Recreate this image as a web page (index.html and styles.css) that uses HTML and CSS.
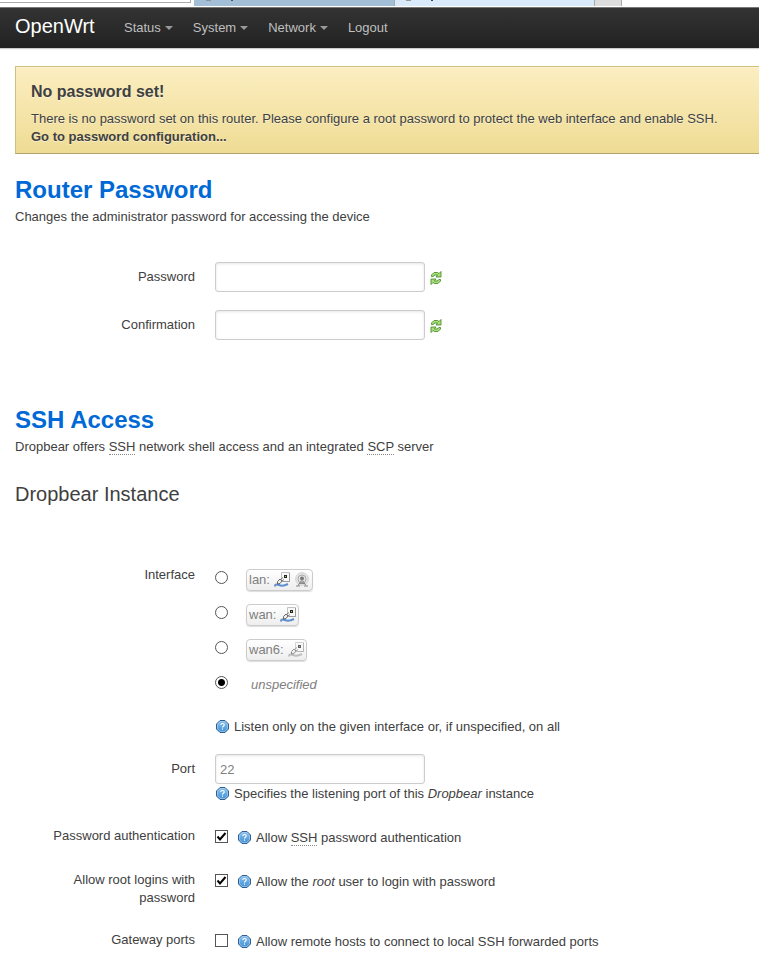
FILE: index.html
```html
<!DOCTYPE html>
<html lang="en">
<head>
<meta charset="utf-8">
<meta name="viewport" content="width=device-width, initial-scale=1">
<title>OpenWrt - Router Password</title>
<link rel="stylesheet" href="styles.css">
</head>
<body>
<svg class="defs" aria-hidden="true">
  <defs>
    <linearGradient id="help-fill" x1="0" y1="0" x2="0" y2="1"><stop offset="0" stop-color="#8fc4ee"/><stop offset="1" stop-color="#3d8ed4"/></linearGradient>
    <symbol id="help" viewBox="0 0 13 13">
      <path d="M4 .5h5L12.500 4v5L9 12.500H4L.5 9V4z" fill="url(#help-fill)" stroke="#2f5f90"/>
      <path d="M4.300 1.500h4.400l2.800 2.800v4.400l-2.800 2.800H4.300L1.500 8.700V4.300z" fill="none" stroke="#a5cff2" stroke-width=".7"/>
      <path d="M4.700 5c0-2 3.600-2 3.600 0 0 1.200-1.800 1.200-1.800 2.500M6.500 8.600v1.200" fill="none" stroke="#fff" stroke-width="1.100"/>
    </symbol>
    <symbol id="reload" viewBox="0 0 12 14">
      <path d="M1.500 5.500V4L4 1.500h3.500l1.500 1 2-2v5.500H6L7.500 4H5L3 5.500z" fill="#a9dd78" stroke="#4b8f2c" stroke-width=".9"/>
      <path d="M10.500 8.500V10L8 12.500H4.500l-1.500-1-2 2V8h5L4.500 10H7l2-1.500z" fill="#a9dd78" stroke="#4b8f2c" stroke-width=".9"/>
    </symbol>
    <symbol id="port" viewBox="0 0 16 16">
      <path d="M7.500 .5h8v9h-8z" fill="#f8f8f8" stroke="#c2c2c2"/>
      <path d="M15.500 1v8.500H9" fill="none" stroke="#999"/>
      <path d="M10 3h3v3h-3z" fill="#222"/><path d="M11 4h1v1h-1z" fill="var(--lamp)"/>
      <path d="M1 14.500c0-3 3-2 4-1.500 2 1 5 1 9-1" fill="none" stroke="var(--cable)" stroke-width="2"/>
      <path d="M3.500 12V9.500L6 7l2 2-2 2.500z" fill="#eee" stroke="#666"/>
      <path d="M6.500 7.500L9 5.500M8 9l2-1.500" stroke="#777"/>
    </symbol>
    <symbol id="wifi" viewBox="0 0 16 16">
      <circle cx="8" cy="7" r="6.300" fill="#e6e6e6" stroke="#d0d0d0"/>
      <circle cx="8" cy="7" r="4" fill="none" stroke="#aaa"/>
      <circle cx="8" cy="6.500" r="2" fill="#777"/>
      <path d="M8 7v4M7 9l-3 4.500M9 9l3 4.500M2 14h4M10 14h4M5 11.500h6" fill="none" stroke="#888"/>
    </symbol>
  </defs>
</svg>

<div class="browser" aria-hidden="true">
  <span class="address"></span>
  <span class="tab tab-back"></span>
  <span class="tab tab-front"></span>
  <span class="tab tab-new"></span>
</div>

<header class="topbar">
  <a class="brand" href="#">OpenWrt</a>
  <nav class="menu">
    <a class="more" href="#">Status</a>
    <a class="more" href="#">System</a>
    <a class="more" href="#">Network</a>
    <a href="#">Logout</a>
  </nav>
</header>

<main>
  <section class="alert">
    <h4>No password set!</h4>
    <p>There is no password set on this router. Please configure a root password to protect the web interface and enable SSH.</p>
    <a href="#password">Go to password configuration...</a>
  </section>

  <form>
    <section>
      <h2>Router Password</h2>
      <p>Changes the administrator password for accessing the device</p>
      <div class="fields passwords">
        <div class="row">
          <label class="name" for="password">Password</label>
          <div class="entry"><input class="text" id="password" type="password"><button class="reveal" type="button" aria-label="Reveal password"><svg><use href="#reload"/></svg></button></div>
        </div>
        <div class="row">
          <label class="name" for="confirm">Confirmation</label>
          <div class="entry"><input class="text" id="confirm" type="password"><button class="reveal" type="button" aria-label="Reveal confirmation"><svg><use href="#reload"/></svg></button></div>
        </div>
      </div>
    </section>

    <section class="ssh">
      <h2>SSH Access</h2>
      <p>Dropbear offers <abbr>SSH</abbr> network shell access and an integrated <abbr>SCP</abbr> server</p>
      <h3>Dropbear Instance</h3>
      <div class="fields instance">
        <div class="row" role="radiogroup" aria-labelledby="iface-name">
          <span class="name" id="iface-name">Interface</span>
          <div>
            <div class="choices">
              <div class="choice"><input type="radio" name="iface" id="lan"><label class="badge" for="lan">lan: <svg><use href="#port"/></svg><svg><use href="#wifi"/></svg></label></div>
              <div class="choice"><input type="radio" name="iface" id="wan"><label class="badge" for="wan">wan: <svg><use href="#port"/></svg></label></div>
              <div class="choice"><input type="radio" name="iface" id="wan6"><label class="badge down" for="wan6">wan6: <svg><use href="#port"/></svg></label></div>
              <div class="choice"><input type="radio" name="iface" id="any" checked><label class="any" for="any">unspecified</label></div>
            </div>
            <div class="hint"><svg><use href="#help"/></svg><span>Listen only on the given interface or, if unspecified, on all</span></div>
          </div>
        </div>
        <div class="row">
          <label class="name" for="port-number">Port</label>
          <div>
            <input class="text" id="port-number" type="text" placeholder="22">
            <div class="hint"><svg><use href="#help"/></svg><span>Specifies the listening port of this <em>Dropbear</em> instance</span></div>
          </div>
        </div>
        <div class="row tick">
          <label class="name" for="pw-auth">Password authentication</label>
          <div class="entry"><input type="checkbox" id="pw-auth" checked><div class="hint"><svg><use href="#help"/></svg><span>Allow <abbr>SSH</abbr> password authentication</span></div></div>
        </div>
        <div class="row tick">
          <label class="name" for="root-auth">Allow root logins with password</label>
          <div class="entry"><input type="checkbox" id="root-auth" checked><div class="hint"><svg><use href="#help"/></svg><span>Allow the <em>root</em> user to login with password</span></div></div>
        </div>
        <div class="row tick">
          <label class="name" for="gateway">Gateway ports</label>
          <div class="entry"><input type="checkbox" id="gateway"><div class="hint"><svg><use href="#help"/></svg><span>Allow remote hosts to connect to local SSH forwarded ports</span></div></div>
        </div>
      </div>
    </section>
  </form>
</main>
</body>
</html>
```

FILE: styles.css
```css
* { box-sizing: border-box; }
body {
  margin: 0;
  background: #fff;
  color: #404040;
  font: 13px/18px "Liberation Sans", Arial, sans-serif;
}
.defs { position: absolute; width: 0; height: 0; }
h2, h3, h4, p { margin: 0; }
a { color: inherit; text-decoration: none; }

/* Lower edge of the browser's tab strip */
.browser { display: flex; height: 7px; }
.address { width: 191px; height: 3px; margin-right: 3px; border: solid #aaa; border-width: 0 1px 1px 0; }
.tab { height: 6px; border-right: 1px solid #aaa; }
.tab-back { width: 201px; background: linear-gradient(#8b9297, #8b9297) 12px 0 / 5px 1px no-repeat, linear-gradient(#456, #456) 37px 0 / 2px 1px no-repeat, #a3bfd8; }
.tab-front { width: 200px; background: linear-gradient(#999, #999) 11px 0 / 5px 1px no-repeat, linear-gradient(#345, #345) 36px 0 / 2px 1px no-repeat, #d9ebfb; }
.tab-new { width: 27px; background: #ddd; }

.topbar {
  display: flex;
  height: 41px;
  padding-left: 15px;
  border-top: 1px solid #777;
  background: linear-gradient(#333, #222);
  box-shadow: 0 1px 1px #ccc;
  color: #bfbfbf;
  line-height: 39px;
}
.brand { width: 109px; color: #fff; font-size: 20px; line-height: 36px; }
.menu { display: flex; gap: 20px; }
.more::after {
  content: "";
  display: inline-block;
  margin-left: 4px;
  border: 4px solid transparent;
  border-top-color: #999;
  border-bottom: 0;
  vertical-align: 2px;
}

main { padding: 18px 0 9px 15px; }
.alert {
  height: 88px;
  padding: 15px 0 0 15px;
  border: 1px solid #d0bf76;
  border-bottom-color: #b3a269;
  border-right: 0;
  background: linear-gradient(#fceec1, #eedc94);
  box-shadow: inset 0 1px 0 #fdf4d6;
  text-shadow: 0 1px 0 rgba(255, 255, 255, .5);
}
.alert h4 { margin-bottom: 8px; font-size: 16px; line-height: 20px; }
.alert a { display: block; font-weight: bold; }

form { margin-top: 18px; }
h2 { color: #0069d6; font-size: 24px; line-height: 36px; }
h3 { margin-top: 20px; font-size: 20px; font-weight: normal; line-height: 36px; }
abbr { border-bottom: 1px dotted #888; text-decoration: none; }

.fields { display: grid; gap: 18px; }
.passwords { margin-top: 36px; }
.ssh { margin-top: 62px; }
.instance { margin-top: 54px; }
.row { display: grid; grid-template-columns: 180px 1fr; column-gap: 20px; }
.name { padding-top: 6px; text-align: right; }
#iface-name { padding-top: 0; }
.tick .name { padding-top: 0; }
.entry { display: flex; align-items: center; }
.tick .entry { align-items: flex-start; }
.tick { margin-top: 6px; }
.tick .hint { padding: 2px 0 0 10px; margin: 0; }

.text {
  display: block;
  width: 210px;
  height: 30px;
  padding: 4px;
  border: 1px solid #ccc;
  border-radius: 3px;
  background: #fff;
  box-shadow: inset 0 1px 3px rgba(0, 0, 0, .1);
  color: #808080;
  font: inherit;
}
.text::placeholder { color: #808080; }
.reveal { margin-left: 5px; padding: 1px 0 0; border: 0; background: none; }
.reveal svg { display: block; width: 12px; height: 14px; }

.choices { display: grid; gap: 13px; padding-top: 3px; }
.choice { display: flex; align-items: center; height: 22px; }
input[type="radio"], input[type="checkbox"] {
  flex: none;
  width: 13px;
  height: 13px;
  margin: 0;
  border: 1px solid #555;
  background: #fff;
  appearance: none;
}
input[type="radio"] { margin: 0 18px 5px 0; border-radius: 50%; }
input[type="radio"]:checked { background: radial-gradient(circle, #000 3px, #fff 4px); }
input[type="checkbox"] { margin-top: 3px; }
input[type="checkbox"]:checked {
  background: url("data:image/svg+xml,%3Csvg xmlns='http://www.w3.org/2000/svg' viewBox='0 0 11 11'%3E%3Cpath d='M1.500 5.500l2.500 3L9.500 2' fill='none' stroke='%23000' stroke-width='2'/%3E%3C/svg%3E") #fff;
}
.badge {
  --lamp: #9d4;
  --cable: #5b8fcf;
  display: flex;
  align-items: center;
  gap: 4px;
  height: 22px;
  padding: 0 2px;
  border: 1px solid #ccc;
  border-radius: 4px;
  background: linear-gradient(#fff, #eee);
  box-shadow: 0 1px 1px #ddd;
  color: #808080;
}
.badge svg { width: 16px; height: 16px; }
.down { --lamp: #777; --cable: #aaa; }
.down svg { opacity: .7; }
.any { padding-left: 5px; color: #808080; font-style: italic; }

.hint { display: flex; align-items: flex-start; gap: 5px; padding-left: 1px; }
.hint svg { flex: none; width: 13px; height: 13px; margin-top: 2px; }
.choices + .hint { margin-top: 22px; }
.text + .hint { margin-top: 1px; }
```
